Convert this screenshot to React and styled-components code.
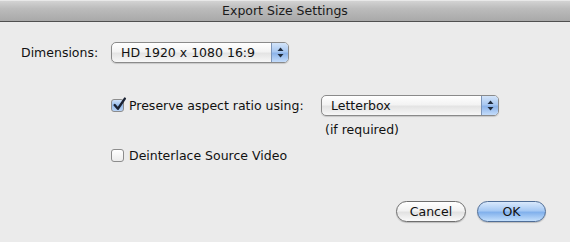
import React from "react"
import styled, { createGlobalStyle } from "styled-components"

const Global = createGlobalStyle`
  html, body {
    margin: 0;
    padding: 0;
    background: #ececec;
  }
  body {
    font-family: "DejaVu Sans", "Liberation Sans", sans-serif;
    font-size: 12.5px;
    color: #111;
  }
`

const Dialog = styled.div`
  width: 570px;
  height: 242px;
  background: #ebebeb;
  display: flex;
  flex-direction: column;
  overflow: hidden;
`

const TitleBar = styled.div`
  height: 21px;
  border-bottom: 1px solid #505050;
  background: linear-gradient(#d6d6d6, #bcbcbc 40%, #a9a9a9);
  display: flex;
  align-items: center;
  justify-content: center;
  font-size: 12.5px;
  color: #1a1a1a;
  box-shadow: inset 0 1px 0 #e8e8e8;
`

const Body = styled.div`
  flex: 1;
  display: flex;
  flex-direction: column;
  padding: 20px 24px 0 21px;
`

const Row = styled.div`
  display: flex;
  align-items: center;
  margin-top: ${p => p.$mt || 0}px;
`

const Label = styled.span`
  width: ${p => p.$w || "auto"};
  flex-shrink: 0;
`

const Options = styled.div`
  display: flex;
  flex-direction: column;
  margin: 32px 0 0 90px;
`

const Popup = styled.div`
  width: ${p => p.$w}px;
  height: 21px;
  box-sizing: border-box;
  border: 1px solid #8a8a8a;
  border-radius: 5px;
  background: linear-gradient(#ffffff, #f3f3f3 45%, #e4e4e4 55%, #f7f7f7);
  box-shadow: 0 1px 1px rgba(0, 0, 0, 0.15);
  display: flex;
  align-items: stretch;
  overflow: hidden;
`

const PopupText = styled.span`
  flex: 1;
  padding-left: 9px;
  display: flex;
  align-items: center;
`

const Stepper = styled.span`
  width: 16px;
  border-left: 1px solid #7d95b8;
  background: linear-gradient(#d3e4f9, #a9c8f1 45%, #8db4ea 55%, #c4dcfa);
  display: flex;
  align-items: center;
  justify-content: center;
`

const Check = styled.span`
  width: 13px;
  height: 13px;
  box-sizing: border-box;
  border: 1px solid #8c8c8c;
  border-radius: 3px;
  background: ${p =>
    p.$on
      ? "linear-gradient(#cfe1f8, #94bbec 50%, #b9d4f6)"
      : "linear-gradient(#ffffff, #ececec)"};
  position: relative;
  margin-right: 5px;
  flex-shrink: 0;
`

const Tick = styled.svg`
  position: absolute;
  left: 0;
  top: -3px;
`

const Note = styled.div`
  margin: 6px 0 0 214px;
`

const Footer = styled.div`
  display: flex;
  justify-content: flex-end;
  gap: 11px;
  padding: 0 24px 20px 0;
`

const Button = styled.button`
  width: ${p => p.$w}px;
  height: 21px;
  border-radius: 11px;
  border: 1px solid ${p => (p.$primary ? "#4f6d96" : "#6e6e6e")};
  background: ${p =>
    p.$primary
      ? "linear-gradient(#d9e9fc, #a6c9f4 45%, #82b1ec 55%, #c3dffc)"
      : "linear-gradient(#ffffff, #f2f2f2 45%, #e2e2e2 55%, #fafafa)"};
  box-shadow: 0 1px 1px rgba(0, 0, 0, 0.2);
  font-family: inherit;
  font-size: 12.5px;
  color: #111;
  padding: 0;
`

const Arrows = () => (
  <svg width="7" height="11" viewBox="0 0 7 11">
    <path d="M3.5 0.5 L6.5 4 L0.5 4 Z" fill="#1e2a3c" />
    <path d="M3.5 10.5 L6.5 7 L0.5 7 Z" fill="#1e2a3c" />
  </svg>
)

const Select = ({ width, children }) => (
  <Popup $w={width}>
    <PopupText>{children}</PopupText>
    <Stepper>
      <Arrows />
    </Stepper>
  </Popup>
)

const Checkbox = ({ on }) => (
  <Check $on={on}>
    {on && (
      <Tick width="15" height="15" viewBox="0 0 14 14">
        <path
          d="M2.5 7.5 L5.5 11 L12 1.5"
          fill="none"
          stroke="#1a2233"
          strokeWidth="2.2"
          strokeLinecap="round"
          strokeLinejoin="round"
        />
      </Tick>
    )}
  </Check>
)

export default function App() {
  return (
    <Dialog>
      <Global />
      <TitleBar>Export Size Settings</TitleBar>
      <Body>
        <Row>
          <Label $w="90px">Dimensions:</Label>
          <Select width={178}>HD 1920 x 1080 16:9</Select>
        </Row>
        <Options>
          <Row>
            <Checkbox on />
            <Label $w="192px">Preserve aspect ratio using:</Label>
            <Select width={178}>Letterbox</Select>
          </Row>
          <Note>(if required)</Note>
          <Row $mt={11}>
            <Checkbox />
            <Label>Deinterlace Source Video</Label>
          </Row>
        </Options>
      </Body>
      <Footer>
        <Button $w={70}>Cancel</Button>
        <Button $w={69} $primary>
          OK
        </Button>
      </Footer>
    </Dialog>
  )
}
